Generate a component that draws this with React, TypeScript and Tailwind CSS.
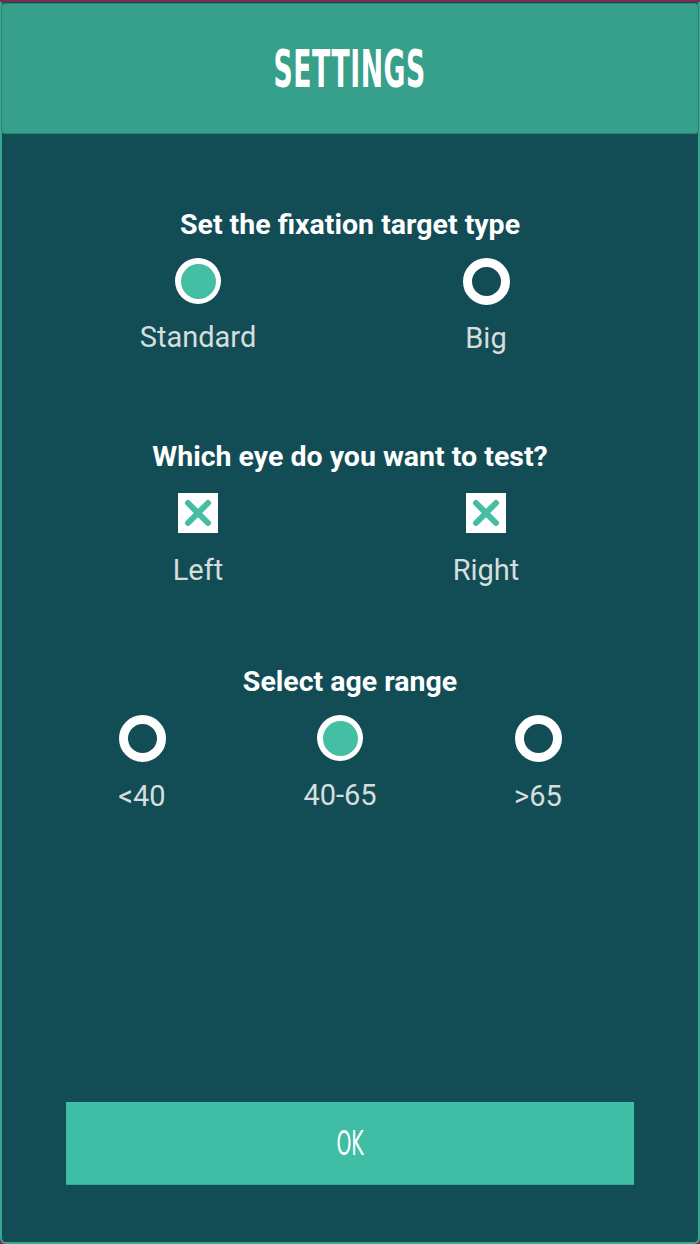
import React from "react";

const Radio = ({ selected }: { selected: boolean }) =>
  selected ? (
    <div className="w-[46px] h-[46px] rounded-full bg-white flex items-center justify-center">
      <div className="w-[35px] h-[35px] rounded-full bg-[#44bfa4]" />
    </div>
  ) : (
    <div className="w-[47px] h-[47px] rounded-full border-[9px] border-white bg-[#124d56]" />
  );

const Check = () => (
  <svg width="40" height="40" viewBox="0 0 40 40">
    <rect x="0" y="0" width="40" height="40" fill="#ffffff" />
    <path d="M10 10 L30 30 M30 10 L10 30" stroke="#44bfa4" strokeWidth="6" strokeLinecap="round" />
  </svg>
);

const Label = ({ children }: { children: React.ReactNode }) => (
  <div className="h-[32px] leading-[32px] text-[29px] text-[#d6dddd]">{children}</div>
);

const Heading = ({ children }: { children: React.ReactNode }) => (
  <div className="h-[30px] leading-[30px] text-[28.5px] font-bold text-white text-center">{children}</div>
);

export default function App() {
  return (
    <div
      className="w-[700px] h-[1244px] bg-[#7a2c4c] pt-[2px] flex flex-col"
      style={{ fontFamily: "Roboto, 'Noto Sans', sans-serif" }}
    >
      <div className="flex-1 bg-[#124d56] border-x-2 border-b-2 border-[#3aa890] rounded-b-[6px] flex flex-col">
        <div className="h-[131px] mt-[1px] -mx-[1px] bg-[#36a08a] border border-[#2b8475] rounded-[4px] flex items-center justify-center">
          <span
            className="text-white font-bold text-[52px] leading-none inline-block scale-x-[0.57] tracking-[1px]"
            style={{ fontFamily: "'DejaVu Sans Condensed', 'DejaVu Sans', sans-serif" }}
          >
            SETTINGS
          </span>
        </div>

        <div className="mt-[76px] flex flex-col">
          <Heading>Set the fixation target type</Heading>
          <div className="grid grid-cols-2 pl-[52px] pr-[68px] mt-[18px]">
            <div className="flex flex-col items-center">
              <Radio selected />
              <div className="mt-[17px]"><Label>Standard</Label></div>
            </div>
            <div className="flex flex-col items-center">
              <Radio selected={false} />
              <div className="mt-[17px]"><Label>Big</Label></div>
            </div>
          </div>
        </div>

        <div className="mt-[88px] flex flex-col">
          <Heading>Which eye do you want to test?</Heading>
          <div className="grid grid-cols-2 pl-[52px] pr-[68px] mt-[21px]">
            <div className="flex flex-col items-center">
              <Check />
              <div className="mt-[21px]"><Label>Left</Label></div>
            </div>
            <div className="flex flex-col items-center">
              <Check />
              <div className="mt-[21px]"><Label>Right</Label></div>
            </div>
          </div>
        </div>

        <div className="mt-[81px] flex flex-col">
          <Heading>Select age range</Heading>
          <div className="grid grid-cols-3 pl-[41px] pr-[61px] mt-[18px]">
            <div className="flex flex-col items-center">
              <Radio selected={false} />
              <div className="mt-[18px]"><Label>&lt;40</Label></div>
            </div>
            <div className="flex flex-col items-center">
              <Radio selected />
              <div className="mt-[18px]"><Label>40-65</Label></div>
            </div>
            <div className="flex flex-col items-center">
              <Radio selected={false} />
              <div className="mt-[18px]"><Label>&gt;65</Label></div>
            </div>
          </div>
        </div>

        <div className="flex-1" />
        <div className="px-[64px] pb-[57px]">
          <button className="w-full h-[83px] bg-[#3fbda5] border-b border-[#38a893] flex items-center justify-center">
            <span
              className="text-white text-[34px] leading-none inline-block scale-x-[0.62]"
              style={{ fontFamily: "'DejaVu Sans Condensed', 'DejaVu Sans', sans-serif" }}
            >
              OK
            </span>
          </button>
        </div>
      </div>
    </div>
  );
}
